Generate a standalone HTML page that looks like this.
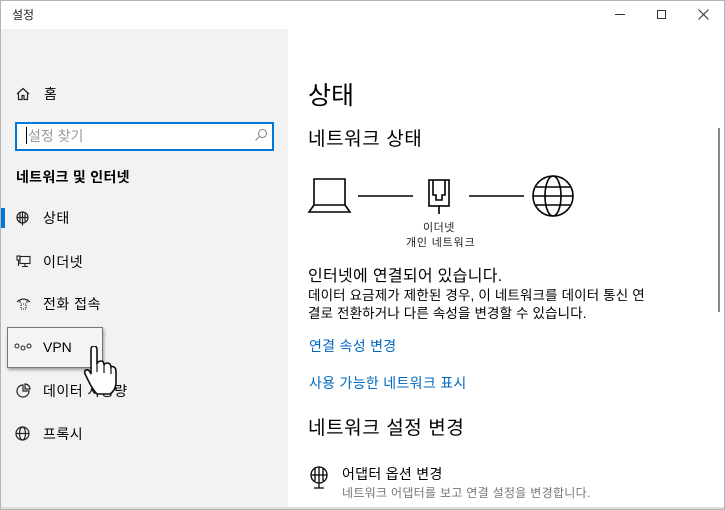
<!DOCTYPE html>
<html><head><meta charset="utf-8"><style>
*{margin:0;padding:0;box-sizing:border-box}
body{width:725px;height:510px;overflow:hidden;background:#fff;font-family:"Liberation Sans","Noto Sans CJK KR",sans-serif;color:#000;position:relative}
.a{position:absolute;white-space:nowrap}
</style></head><body>
<div class="a" style="left:0;top:0;width:725px;height:510px;border:1px solid #b4b4b4"></div>
<div class="a" style="left:1px;top:29px;width:287px;height:479px;background:#f2f2f2"></div>
<div class="a" style="left:12px;top:6px;font-size:12px;color:#222">설정</div>
<div class="a" style="left:615px;top:14px;width:10px;height:1px;background:#333"></div>
<div class="a" style="left:657px;top:10px;width:9px;height:9px;border:1px solid #333"></div>
<svg class="a" style="left:698px;top:9px" width="11" height="11" stroke="#333" stroke-width="1.1"><path d="M0.5 0.5l10 10M10.5 0.5l-10 10"/></svg>
<div class="a" style="left:718px;top:128px;width:2px;height:184px;background:#888"></div>
<div class="a" style="left:1px;top:507px;width:723px;height:2px;background:#ddd"></div>

<!-- sidebar -->
<svg class="a" style="left:16px;top:87px" width="14" height="14" viewBox="0 0 14 14" fill="none" stroke="#222" stroke-width="1.2"><path d="M1 7L7 1.5 13 7M2.5 6v6.5h3.5v-4h2v4h3.5V6"/></svg>
<div class="a" style="left:44px;top:84px;font-size:14px">홈</div>
<div class="a" style="left:15px;top:122px;width:259px;height:29px;border:2px solid #0078d7;background:#fff"></div>
<div class="a" style="left:26px;top:127px;width:1px;height:17px;background:#000"></div>
<div class="a" style="left:28px;top:126px;font-size:14px;color:#999">설정 찾기</div>
<svg class="a" style="left:254px;top:128px" width="14" height="14" fill="none" stroke="#888" stroke-width="1.1"><circle cx="8.5" cy="5.5" r="4"/><path d="M5.5 8.5L1.5 12.5"/></svg>
<div class="a" style="left:16px;top:167px;font-size:14px;font-weight:bold;letter-spacing:0.3px">네트워크 및 인터넷</div>
<div class="a" style="left:1px;top:208px;width:4px;height:20px;background:#0078d7"></div>
<svg class="a" style="left:15px;top:211px" width="15" height="15" fill="none" stroke="#222" stroke-width="1.2"><circle cx="7.5" cy="6.5" r="5.5"/><path d="M2 6.5h11M7.5 1v11M5 2.5v8M10 2.5v8M7.5 12v2.5"/></svg>
<div class="a" style="left:43px;top:208px;font-size:14px;letter-spacing:0.5px">상태</div>
<svg class="a" style="left:16px;top:255px" width="15" height="13" fill="none" stroke="#222" stroke-width="1.1"><rect x="4" y="1.5" width="10" height="7"/><rect x="1" y="1" width="3" height="4"/><path d="M9 8.5v3M6 11.5h6M2.5 5v6"/></svg>
<div class="a" style="left:43px;top:252px;font-size:14px;letter-spacing:0.5px">이더넷</div>
<svg class="a" style="left:16px;top:297px" width="15" height="14" fill="none" stroke="#222" stroke-width="1.1"><path d="M1 5Q7.5 -1 14 5M3 5h2M10 5h2"/><path d="M5 7h5v5H5z" stroke-dasharray="1 1"/></svg>
<div class="a" style="left:43px;top:294px;font-size:14px;letter-spacing:0.5px">전화 접속</div>
<div class="a" style="left:7px;top:327px;width:96px;height:41px;border:1px solid #777;background:#f4f4f4;box-shadow:1px 2px 3px rgba(0,0,0,.35)"></div>
<svg class="a" style="left:14px;top:343px" width="18" height="9" fill="none" stroke="#222" stroke-width="1"><circle cx="3" cy="3" r="2"/><circle cx="9" cy="5" r="2"/><circle cx="15" cy="3" r="2"/></svg>
<div class="a" style="left:43px;top:339px;font-size:14px">VPN</div>
<svg class="a" style="left:16px;top:383px" width="15" height="15" fill="none" stroke="#222" stroke-width="1.2"><path d="M7 2A6 6 0 1 0 13 8H7z"/><path d="M9 1v5h5A5 5 0 0 0 9 1z"/></svg>
<div class="a" style="left:43px;top:381px;font-size:14px;letter-spacing:0.5px">데이터 사용량</div>
<svg class="a" style="left:83px;top:346px" width="34" height="50" viewBox="0 0 34 50"><path d="M8 4Q8 0 11 0Q14 0 14 4V18Q15 15 18 15Q21 15 21 19Q22 17 25 17Q28 18 28 21Q29 20 31 21Q33 22 33 26V36Q33 44 27 48H14Q10 44 6 36L2 28Q1 25 3 24Q5 23 7 26L8 28Z" fill="#fff" stroke="#111" stroke-width="1.6"/><path d="M14 16v10M21 19v8M28 21v7" stroke="#111" stroke-width="1.2"/></svg>
<svg class="a" style="left:15px;top:426px" width="15" height="15" fill="none" stroke="#222" stroke-width="1.2"><circle cx="7.5" cy="7.5" r="6.5"/><ellipse cx="7.5" cy="7.5" rx="3" ry="6.5"/><path d="M1 7.5h13"/></svg>
<div class="a" style="left:43px;top:424px;font-size:14px;letter-spacing:0.5px">프록시</div>

<!-- main -->
<div class="a" style="left:308px;top:76px;font-size:25px">상태</div>
<div class="a" style="left:308px;top:124px;font-size:19px;letter-spacing:0.6px">네트워크 상태</div>
<svg class="a" style="left:305px;top:175px" width="275" height="50" fill="none" stroke="#000" stroke-width="1.6">
<path d="M9 4h31v26H9zM9 30L4 37h41l-5-7"/>
<path d="M53 21h55M164 21h55"/>
<rect x="124" y="5" width="20" height="26"/><path d="M128 5v15h3v5h6v-5h3V5M134 31v8"/>
<circle cx="248" cy="21" r="20"/><ellipse cx="248" cy="21" rx="8" ry="20"/><path d="M228 21h40M231 12h34M231 30h34"/>
</svg>
<div class="a" style="left:423px;top:219px;font-size:11px;color:#222;letter-spacing:0.5px">이더넷</div>
<div class="a" style="left:406px;top:234px;font-size:11px;color:#222;letter-spacing:0.8px">개인 네트워크</div>
<div class="a" style="left:308px;top:262px;font-size:16px;letter-spacing:0.3px">인터넷에 연결되어 있습니다.</div>
<div class="a" style="left:308px;top:287px;font-size:13.5px;line-height:18px;letter-spacing:0.15px">데이터 요금제가 제한된 경우, 이 네트워크를 데이터 통신 연<br>결로 전환하거나 다른 속성을 변경할 수 있습니다.</div>
<div class="a" style="left:309px;top:336px;font-size:14px;color:#0067c0;letter-spacing:0.3px">연결 속성 변경</div>
<div class="a" style="left:309px;top:373px;font-size:14px;color:#0067c0;letter-spacing:0.3px">사용 가능한 네트워크 표시</div>
<div class="a" style="left:308px;top:413px;font-size:19px;letter-spacing:0.6px">네트워크 설정 변경</div>
<svg class="a" style="left:309px;top:466px" width="20" height="26" fill="none" stroke="#000" stroke-width="1.3"><circle cx="10" cy="9" r="8"/><path d="M2 9h16M10 1v16M6 2v13M14 2v13M10 17v5M5 22h10"/></svg>
<div class="a" style="left:342px;top:464px;font-size:14px;letter-spacing:0.3px">어댑터 옵션 변경</div>
<div class="a" style="left:342px;top:484px;font-size:12px;color:#777;letter-spacing:0.3px">네트워크 어댑터를 보고 연결 설정을 변경합니다.</div>
</body></html>
